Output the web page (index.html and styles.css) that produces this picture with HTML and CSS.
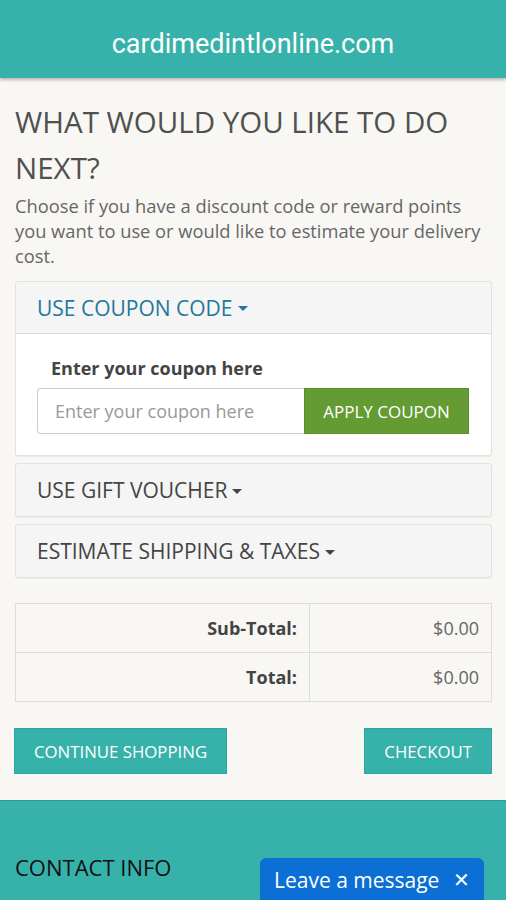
FILE: index.html
```html
<!DOCTYPE html>
<html>
<head>
<meta charset="utf-8">
<link rel="stylesheet" href="styles.css">
</head>
<body>
<header class="topbar">cardimedintlonline.com</header>
<main class="content">
  <h1 class="title">WHAT WOULD YOU LIKE TO DO NEXT?</h1>
  <p class="intro">Choose if you have a discount code or reward points you want to use or would like to estimate your delivery cost.</p>

  <section class="panel">
    <div class="panel-head active">USE COUPON CODE <span class="caret"></span></div>
    <div class="panel-body">
      <label class="label">Enter your coupon here</label>
      <div class="input-group">
        <input class="field" type="text" placeholder="Enter your coupon here">
        <button class="btn-apply">APPLY COUPON</button>
      </div>
    </div>
  </section>

  <section class="panel">
    <div class="panel-head">USE GIFT VOUCHER <span class="caret"></span></div>
  </section>

  <section class="panel">
    <div class="panel-head">ESTIMATE SHIPPING &amp; TAXES <span class="caret"></span></div>
  </section>

  <table class="totals">
    <tr><td class="lbl">Sub-Total:</td><td class="val">$0.00</td></tr>
    <tr><td class="lbl">Total:</td><td class="val">$0.00</td></tr>
  </table>

  <div class="actions">
    <button class="btn-teal">CONTINUE SHOPPING</button>
    <button class="btn-teal">CHECKOUT</button>
  </div>
</main>
<footer class="footer">
  <h2 class="contact">CONTACT INFO</h2>
</footer>
<div class="chat">Leave a message <span class="chat-x">&#x2715;</span></div>
</body>
</html>
```
FILE: styles.css
```css
* { box-sizing: border-box; }
html, body { margin: 0; padding: 0; }
body {
  background: #f8f7f4;
  font-family: "Open Sans", "Liberation Sans", sans-serif;
  color: #666;
  width: 506px;
  height: 900px;
  overflow: hidden;
}
.topbar {
  height: 78px;
  background: #37b2ab;
  color: #fff;
  font-family: Roboto, sans-serif;
  font-size: 27px;
  text-align: center;
  line-height: 88px;
  box-shadow: 0 2px 3px rgba(0,0,0,0.25);
  position: relative;
}
.content { padding: 0 14px 0 15px; }
.title {
  margin: 0;
  padding-top: 21px;
  font-size: 29.5px;
  font-weight: 400;
  line-height: 46px;
  color: #505050;
}
.intro {
  margin: 2px 0 13px;
  font-size: 18.3px;
  line-height: 25px;
  color: #666;
}
.panel {
  border: 1px solid #e2e2e2;
  border-radius: 3px;
  background: #f5f5f5;
  margin-bottom: 7px;
  box-shadow: 0 1px 1px rgba(0,0,0,0.05);
}
.panel-head {
  height: 52px;
  padding-left: 21px;
  display: flex;
  align-items: center;
  gap: 5px;
  font-size: 21px;
  color: #444;
}
.panel-head.active { color: #23789b; border-bottom: 1px solid #ddd; }
.caret {
  width: 0; height: 0;
  border-left: 5.5px solid transparent;
  border-right: 5.5px solid transparent;
  border-top: 5.5px solid currentColor;
  margin-top: 2px;
}
.panel-body {
  background: #fff;
  padding: 22px 22px 21px 21px;
  border-radius: 0 0 3px 3px;
}
.label {
  display: block;
  font-weight: 700;
  font-size: 18px;
  line-height: 25px;
  color: #444;
  padding-left: 14px;
  margin-bottom: 7px;
}
.input-group { display: flex; height: 46px; }
.field {
  flex: 1;
  min-width: 0;
  border: 1px solid #ccc;
  border-right: none;
  border-radius: 4px 0 0 4px;
  padding: 0 17px;
  font-family: inherit;
  font-size: 18px;
  color: #555;
  background: #fff;
}
.field::placeholder { color: #999; }
.btn-apply {
  width: 165px;
  border: 1px solid #5b8e2c;
  background: #659b33;
  color: #fff;
  font-family: inherit;
  font-size: 17px;
}
.totals {
  width: 100%;
  border-collapse: collapse;
  margin-top: 25px;
  font-size: 18px;
}
.totals td {
  border: 1px solid #ddd;
  height: 49px;
  padding: 0 12px;
  text-align: right;
}
.totals .lbl { width: 294px; font-weight: 700; color: #444; }
.totals .val { color: #666; }
.actions {
  display: flex;
  justify-content: space-between;
  margin: 26px 0 0 -1px;
}
.btn-teal {
  height: 46px;
  padding: 0 19px;
  border: 1px solid #2fa39c;
  background: #37b2ab;
  color: #fff;
  font-family: inherit;
  font-size: 16.8px;
}
.footer {
  margin-top: 26px;
  height: 110px;
  background: #37b2ab;
  border-top: 1px solid #2a9c95;
  padding: 51px 15px 0;
}
.contact {
  margin: 0;
  font-size: 22px;
  font-weight: 400;
  color: #111;
}
.chat {
  position: absolute;
  left: 260px;
  top: 858px;
  width: 224px;
  height: 42px;
  background: #0b6fd6;
  border-radius: 6px 6px 0 0;
  color: #fff;
  font-family: "Open Sans", sans-serif;
  font-size: 21px;
  padding: 8px 0 0 14px;
  display: flex;
  gap: 14px;
}
.chat-x { font-size: 20px; }
```
